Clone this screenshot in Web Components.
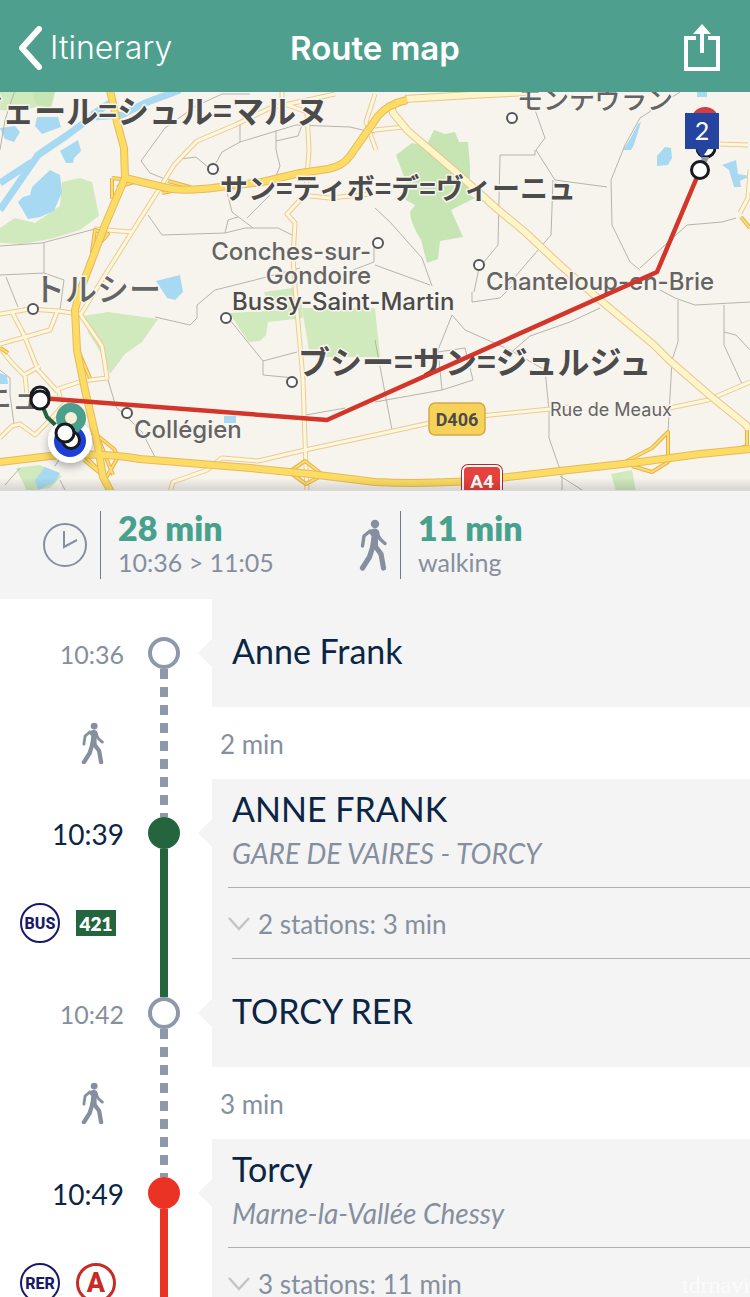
<!DOCTYPE html>
<html lang="en">
<head>
<meta charset="utf-8">
<meta name="viewport" content="width=device-width, initial-scale=1">
<title>Route map</title>
<style>
html {
    scrollbar-width: none;
}

body {
    margin: 0;
    background: #fff;
    color: #0b2545;
    font-family: Lato, "Noto Sans", sans-serif;
}
</style>
</head>
<body>
<route-screen></route-screen>

<script>
const TRIP = [
    { type: "stop", time: "10:36", name: "Anne Frank", below: "walk" },
    { type: "walk", duration: "2 min" },
    {
        type: "stop", time: "10:39", name: "ANNE FRANK", direction: "GARE DE VAIRES - TORCY",
        color: "#24653d", above: "walk", below: "#24653d"
    },
    {
        type: "ride", mode: "BUS", line: "421", shape: "box", color: "#24653d",
        label: "2 stations: 3 min"
    },
    { type: "stop", time: "10:42", name: "TORCY RER", above: "#24653d", below: "walk" },
    { type: "walk", duration: "3 min" },
    {
        type: "stop", time: "10:49", name: "Torcy", direction: "Marne-la-Vallée Chessy",
        color: "#ea3323", above: "walk", below: "#ea3323"
    },
    {
        type: "ride", mode: "RER", line: "A", shape: "circle", color: "#ea3323",
        label: "3 stations: 11 min"
    }
];

// Shared by every timeline row: time | rail | content
const ROW_STYLES = `
:host {
    display: grid;
    grid-template-columns: 124px 80px 8px minmax(0, 1fr);
}
.rail {
    display: flex;
    flex-direction: column;
    align-items: center;
}
.segment {
    flex: 1;
    width: 8px;
}
.segment.walk {
    background: repeating-linear-gradient(#8e98ab 0 10px, transparent 10px 18px);
}
.segment.offset {
    background: repeating-linear-gradient(#8e98ab 0 8px, transparent 8px 16px, #8e98ab 16px 18px);
}
.content {
    grid-column: 4;
}
`;

const ICONS = {
    walk: `<svg viewBox="0 0 28 52" aria-hidden="true">
<circle cx="16" cy="5" r="4.2" fill="currentColor"/>
<path d="M9 13Q12 9.500 16 9.500Q20 10 20.500 14L19 20L19 29L11 29L12.500 17Z" fill="currentColor"/>
<g fill="none" stroke="currentColor" stroke-linecap="round" stroke-linejoin="round">
<path d="M11 12L5 17L3.500 27" stroke-width="3.400"/>
<path d="M18 14L21 20L26 24.500" stroke-width="3.400"/>
<path d="M14 27L10.500 38L3.500 49" stroke-width="5.200"/>
<path d="M16 27L22 35L24.500 49" stroke-width="5.200"/>
</g></svg>`,
    clock: `<svg viewBox="0 0 44 44" fill="none" stroke="currentColor" aria-hidden="true">
<circle cx="22" cy="22" r="21" stroke-width="2"/>
<path d="M21 8V24L34 17" stroke-width="2"/></svg>`,
    back: `<svg viewBox="0 0 24 44" fill="none" stroke="currentColor" aria-hidden="true">
<path d="M21 3L4 22L21 41" stroke-width="6" stroke-linecap="round" stroke-linejoin="round"/></svg>`,
    share: `<svg viewBox="0 0 36 48" fill="none" stroke="currentColor" aria-hidden="true">
<path d="M12 14H2V45H34V14H24" stroke-width="4"/>
<path d="M18 29V7" stroke-width="4"/>
<path d="M18 0L27 10H9Z" fill="currentColor" stroke="none"/></svg>`,
    chevron: `<svg viewBox="0 0 22 14" fill="none" stroke="currentColor" aria-hidden="true">
<path d="M1 1L11 12L21 1" stroke-width="2.400"/></svg>`
};

class AppIcon extends HTMLElement {
    connectedCallback() {
        if (this.shadowRoot) return;
        this.attachShadow({ mode: "open" }).innerHTML = `
<style>
:host { display: block; flex: none; }
svg { display: block; width: 100%; height: auto; }
</style>
${ICONS[this.getAttribute("name")]}`;
    }
}

class NavBar extends HTMLElement {
    constructor() {
        super();
        this.attachShadow({ mode: "open" }).innerHTML = `
<style>
:host {
    display: grid;
    grid-template-columns: 1fr auto 1fr;
    align-items: center;
    height: 92px;
    padding: 4px 30px 0 18px;
    box-sizing: border-box;
    background: #4e9f8e;
    color: #fff;
    font-family: Inter, Roboto, sans-serif;
    font-size: 32px;
    line-height: 40px;
}
a {
    display: flex;
    align-items: center;
    gap: 8px;
    color: inherit;
    font-weight: 300;
    text-decoration: none;
}
h1 {
    margin: 0;
    padding-left: 12px;
    font-size: 33px;
    font-weight: 600;
}
button {
    justify-self: end;
    padding: 0;
    border: 0;
    background: none;
    color: inherit;
}
.back { width: 24px; }
.share { width: 36px; }
</style>
<a href="#itinerary"><app-icon class="back" name="back"></app-icon><slot name="back"></slot></a>
<h1><slot></slot></h1>
<button type="button" aria-label="Share"><app-icon class="share" name="share"></app-icon></button>`;
    }
}

class RouteMap extends HTMLElement {
    constructor() {
        super();
        this.attachShadow({ mode: "open" }).innerHTML = this.getTemplate();
    }

    getTemplate() {
        const motorways = [
            "M110 90L117 122L124 148L125 178L105 225L90 265L80 291L75 310L77 350L85 390L92 420L98 447L103 477L112 494",
            "M125 178L150 184L172 189Q192 191 220 187L262 182L300 173L328 169Q343 166 350 156L378 116Q388 104 407 100",
            "M0 462L50 456Q100 452 140 459L250 468L310 474L375 482Q440 485 500 478L560 471L640 462L700 454L750 449"
        ];
        const roads = [
            "M390 102L393 113L408 131L456 172L496 208L525 232L560 265L600 300L654 345L670 361L714 399L745 424L750 430",
            "M405 99L470 95L530 92"
        ];
        const lanes = [
            "M335 94L270 108L235 125L197 141L174 165L163 183L132 232L105 275L81 314",
            "M282 90V103L307 112L309 150L306 190M300 200L287 214L295 223L293 258L296 300L300 345L303 380L305 440L307 492",
            "M170 492L173 482L207 470L222 458L258 461L305 450L375 435L430 423L490 415L570 407M660 410L708 400L750 382",
            "M94 229L132 232M375 130L404 127M375 94L366 122L376 150M310 196L330 198L370 194",
            "M0 314L30 309L58 311L80 314L102 346L107 378L82 381L58 389L60 397",
            "M0 344L50 330L57 312M12 312L24 335L38 370L58 392",
            "M0 348L12 363L24 375L40 366M25 376L27 395M0 438L12 426L20 424L35 435L52 418L68 400",
            "M720 144L748 145M750 170L748 198L740 213"
        ];
        const ramps = [
            "M112 178V199M112 178L138 181L117 187M168 181L190 187L162 193M95 230L108 234L92 252Z",
            "M98 436L114 449L118 457L106 478L86 457M100 473L84 460M99 440L113 475M78 350L90 378",
            "M625 462L652 448L668 432V462L652 472L632 466M289 472L305 461L323 475L306 484Z",
            "M747 430V446L735 450M0 348L8 353M741 217L750 228"
        ];
        const tracks = [
            "M15 90L5 120L0 150M0 246L42 243L95 229M44 243V273L0 275M44 273L64 280L60 310M6 277L18 307",
            "M250 94H222L196 106L165 128L141 161L150 173L165 179M180 159L196 157L209 168M216 163L222 152L240 142V124M240 142L296 125L350 127L375 133M276 130V150L280 166L274 181M276 141L298 136L302 125",
            "M148 215L162 235L225 233L245 228L278 228L292 235M225 184L232 212L253 228M247 218L270 195M225 233L228 220L238 217M215 290L255 280L300 268M340 275L374 262V245",
            "M108 380L116 407L130 420L142 432L155 457M155 317L190 325L197 318V305L215 290M230 320L263 361V375L295 378M263 361L297 352M306 415L345 408",
            "M535 110L545 138L536 150L555 180L607 187M535 150V155H500L498 245L479 268L474 292M553 180L551 235L508 285",
            "M680 92L640 118L625 145L611 180L612 225L630 262L640 270M640 268L687 225L722 222L736 218",
            "M678 300V342L672 360L668 432M724 305V345L742 384M724 332L736 335L750 350M660 290L675 298L695 305L750 302",
            "M375 208L390 222L422 258L432 286M375 265L430 285M472 292V302L500 298L512 286M452 315L465 330L510 350L545 370L549 410V438L562 475V490",
            "M452 315L438 350L442 390L375 402M442 390L473 380L465 348L438 352M375 340L392 430M600 308L570 322L530 336L500 362",
            "M0 370L10 378V395L14 424M62 455L55 466M20 468L5 485M60 480L66 492M560 476L582 490"
        ];
        const paths = (list, attrs) => list.map((d) => `<path d="${d}" ${attrs}/>`).join("");

        return `
<style>
:host {
    display: block;
    overflow: hidden;
    border-bottom: 1px solid #dadad8;
}
svg { display: block; width: 100%; height: auto; }
text {
    fill: #4b4b4b;
    font-family: Inter, Roboto, sans-serif;
    font-size: 24px;
    font-weight: 500;
    paint-order: stroke;
    stroke: #f8f5ef;
    stroke-width: 3px;
    stroke-linejoin: round;
}
.jp {
    font-family: "Noto Sans CJK JP", sans-serif;
    font-weight: 700;
}
.soft { fill: #646464; font-weight: 500; }
.plain { stroke: none; }
</style>
<svg viewBox="0 92 750 398" role="img" aria-label="Map of the route from Torcy">
<defs>
<filter id="shadow" x="-50%" y="-50%" width="200%" height="200%">
<feDropShadow dx="0" dy="4" stdDeviation="4" flood-opacity="0.3"/>
</filter>
<linearGradient id="edge" x1="0" y1="0" x2="0" y2="1">
<stop offset="0" stop-color="#000" stop-opacity="0"/>
<stop offset="1" stop-color="#000" stop-opacity="0.13"/>
</linearGradient>
</defs>
<rect y="92" width="750" height="398" fill="#f7f4ee"/>
<g fill="#d0e9bd">
<path d="M0 228L15 218L35 223L60 206L62 182L80 178L92 182L99 216L80 230L50 239L22 244L0 243Z"/>
<path d="M0 92H55L51 110L38 106L20 112L0 110Z"/>
<path d="M83 316L108 312L158 319L142 342L125 354L110 374L101 353L88 332Z"/>
<path d="M230 313L302 309L303 318L268 322L266 335L260 341L249 342L239 328ZM264 292L292 288L302 302V310H270Z"/>
<path d="M302 308L375 308L380 357H310Z"/>
<path d="M16 468L40 465L62 476L50 488L27 491Z"/>
<path d="M611 474L632 470L636 491H616Z"/>
</g>
<path d="M434 130L445 134L455 132L459 142H468L470 165V195L475 198L451 210L463 237L440 241L438 259L427 263L421 240Q410 222 410 212L415 205L400 197L407 185L396 155L412 143L426 146Z" fill="#c6e5b3"/>
<path d="M32 92L55 92L50 108L36 104Z" fill="#c6e5b3"/>
<g fill="#a8d9f2">
<path d="M23 197L30 195L32 187L50 170L60 175L62 192L54 211L40 217L28 219L18 202Z"/>
<path d="M37 117L58 117L61 127L42 134L35 126Z"/>
<path d="M0 128L15 126L20 132L14 142L5 139Z"/>
<path d="M60 151L78 140L81 151L74 158L73 163L66 163Z"/>
<path d="M156 281L180 275L183 292L175 300L167 298Z"/>
<path d="M0 373L7 376L8 384L0 384ZM35 480L45 467L60 473L55 482L38 490Z"/>
<path d="M224 416H236V423H224ZM697 92H707V97H697Z"/>
<path d="M638 124L641 122L634 145L631 150H623L630 139Z"/>
<path d="M665 147L671 148L672 158L668 165L657 166V156Z"/>
<path d="M722 165L736 160L738 174L750 176L740 181L741 187H734L729 170Z"/>
</g>
<path d="M0 210L22 178L38 155L66 136L92 117L122 115L145 103L180 90M0 183L32 162M92 115L110 103" fill="none" stroke="#a8d9f2" stroke-width="7" stroke-linejoin="round"/>
<g fill="none" stroke-linejoin="round">
${paths(tracks, 'stroke="#b6b4ad" stroke-width="1"')}
${paths(lanes, 'stroke="#ecca96" stroke-width="5"')}
${paths(lanes, 'stroke="#fdf7dc" stroke-width="3"')}
${paths(roads, 'stroke="#e8c58e" stroke-width="8"')}
${paths(roads, 'stroke="#fef5c9" stroke-width="6"')}
${paths(ramps, 'stroke="#e6b24e" stroke-width="4"')}
${paths(ramps, 'stroke="#fcdc6a" stroke-width="2"')}
${paths(motorways, 'stroke="#e8b960" stroke-width="8"')}
${paths(motorways, 'stroke="#fcdc62" stroke-width="6"')}
</g>
<g fill="#fff" stroke="#555" stroke-width="2">
<circle cx="512" cy="118" r="5"/><circle cx="213" cy="169" r="5"/>
<circle cx="378" cy="243" r="5"/><circle cx="479" cy="265" r="5"/>
<circle cx="33" cy="309" r="5"/><circle cx="226" cy="318" r="5"/>
<circle cx="292" cy="382" r="5"/><circle cx="127" cy="413" r="5"/>
</g>
<text class="jp" x="328" y="123" text-anchor="end" style="font-size:32px">ヴェール=シュル=マルヌ</text>
<text class="jp soft" x="517" y="109" style="font-size:26px">モンテヴラン</text>
<text class="jp" x="220" y="199" style="font-size:28px">サン=ティボ=デ=ヴィーニュ</text>
<text class="jp soft" x="33" y="301" style="font-size:32px">トルシー</text>
<text class="jp" x="298" y="374" style="font-size:32px">ブシー=サン=ジュルジュ</text>
<text class="jp soft" x="40" y="409" text-anchor="end" style="font-size:28px">ニュ</text>
<text class="soft" x="371" y="260" text-anchor="end">Conches-sur-</text>
<text class="soft" x="371" y="284" text-anchor="end">Gondoire</text>
<text x="232" y="310">Bussy-Saint-Martin</text>
<text class="soft" x="486" y="290">Chanteloup-en-Brie</text>
<text class="soft" x="134" y="438">Collégien</text>
<text class="soft" x="550" y="416" style="font-size:18px;font-weight:400">Rue de Meaux</text>
<rect x="429" y="403" width="56" height="32" rx="6" fill="#f6d358" stroke="#d3a94c" stroke-width="1.5"/>
<text class="plain" x="457" y="426" text-anchor="middle" style="font-family:Roboto;font-size:18px;font-weight:700">D406</text>
<rect x="461" y="464" width="42" height="40" rx="7" fill="#b32a2b"/>
<rect x="463" y="466" width="38" height="38" rx="5" fill="#e5413d" stroke="#fff" stroke-width="2"/>
<text class="plain" x="482" y="488" text-anchor="middle" style="font-family:Roboto;font-size:19px;font-weight:700;fill:#fff">A4</text>
<rect y="478" width="750" height="12" fill="url(#edge)"/>
<g fill="none" stroke-linejoin="round">
<path d="M40 398L327 420L657 272L700 170" stroke="#d2352a" stroke-width="4.500"/>
<path d="M40 400L47 417L65 434" stroke="#24653d" stroke-width="4"/>
</g>
<circle cx="70" cy="441" r="22" fill="#fff" filter="url(#shadow)"/>
<circle cx="70" cy="441" r="16" fill="#1d3fd8"/>
<path d="M59 427L84 425L71 442Z" fill="#4a9f8d"/>
<circle cx="71" cy="418" r="10.500" fill="#f7efd5" stroke="#4a9f8d" stroke-width="9"/>
<g fill="#fff" stroke="#171b20" stroke-width="3">
<circle cx="71" cy="440" r="8.500"/>
<circle cx="65" cy="433" r="9"/>
<circle cx="40" cy="396" r="9"/>
<circle cx="40" cy="400" r="9"/>
</g>
<circle cx="705" cy="121" r="14" fill="#d33c40"/>
<circle cx="706" cy="148" r="9" fill="#fff" stroke="#171b20" stroke-width="3"/>
<path d="M702 157H709L707 162L700 165Z" fill="#9297ad"/>
<path d="M685 113H719V149H708L702 158L696 149H685Z" fill="#2444a0"/>
<text class="plain" x="702" y="140" text-anchor="middle" style="font-family:Lato;font-size:25px;font-weight:400;fill:#fff">2</text>
<circle cx="700" cy="170" r="8.500" fill="#fff" stroke="#171b20" stroke-width="3"/>
</svg>`;
    }
}

class SummaryItem extends HTMLElement {
    constructor() {
        super();
        this.attachShadow({ mode: "open" }).innerHTML = `
<style>
:host {
    display: grid;
    grid-template-columns: 100px minmax(0, 1fr);
    align-items: center;
    color: #858f9f;
}
.icon {
    display: flex;
    justify-content: flex-end;
    padding-right: 13px;
}
.text {
    padding-left: 17px;
    border-left: 1px solid #6f7a8c;
    font-size: 25px;
    line-height: 34px;
}
strong {
    display: block;
    color: #48a18c;
    font-size: 34px;
    font-weight: 800;
    line-height: 34px;
}
</style>
<div class="icon"><slot name="icon"></slot></div>
<div class="text"><strong><slot name="value"></slot></strong><slot></slot></div>`;
    }
}

class TripSummary extends HTMLElement {
    constructor() {
        super();
        this.attachShadow({ mode: "open" }).innerHTML = `
<style>
:host {
    display: grid;
    grid-template-columns: 2fr 3fr;
    align-items: center;
    height: 108px;
    background: #f4f4f4;
}
.clock { width: 44px; }
.walk { width: 28px; }
</style>
<summary-item>
<app-icon class="clock" slot="icon" name="clock"></app-icon>
<span slot="value">28 min</span>10:36 &gt; 11:05
</summary-item>
<summary-item>
<app-icon class="walk" slot="icon" name="walk"></app-icon>
<span slot="value">11 min</span>walking
</summary-item>`;
    }
}

class StopRow extends HTMLElement {
    setData(stop) {
        this.attachShadow({ mode: "open" }).innerHTML = `
<style>
${ROW_STYLES}
:host { height: 108px; }
time {
    align-self: center;
    padding-top: 2px;
    text-align: right;
    color: #858f9f;
    font-size: 25px;
    line-height: 32px;
}
time.main {
    color: #0b2545;
    font-size: 28px;
}
.dot {
    width: 32px;
    height: 32px;
    box-sizing: border-box;
    border: 4px solid #8e98ab;
    border-radius: 50%;
    background: #fff;
}
.content {
    position: relative;
    display: flex;
    flex-direction: column;
    justify-content: center;
    gap: 4px;
    padding: 0 0 4px 20px;
    background: #f4f4f4;
}
.content::before {
    content: "";
    position: absolute;
    left: -14px;
    top: 40px;
    border: 14px solid transparent;
    border-left: 0;
    border-right-color: #f4f4f4;
}
h2 {
    margin: 0;
    font-size: 34px;
    font-weight: 400;
    line-height: 40px;
}
p {
    margin: 0;
    color: #858f9f;
    font-size: 28px;
    font-style: italic;
    line-height: 40px;
}
</style>
<time></time>
<div class="rail"><div class="segment"></div><div class="dot"></div><div class="segment"></div></div>
<div class="content"><h2></h2></div>`;

        const time = this.shadowRoot.querySelector("time");
        time.textContent = stop.time;
        this.shadowRoot.querySelector("h2").textContent = stop.name;

        if (stop.color) {
            const dot = this.shadowRoot.querySelector(".dot");
            time.className = "main";
            dot.style.background = stop.color;
            dot.style.borderColor = stop.color;
        }

        if (stop.direction) {
            const direction = document.createElement("p");
            direction.textContent = stop.direction;
            this.shadowRoot.querySelector(".content").appendChild(direction);
        }

        const [above, below] = this.shadowRoot.querySelectorAll(".segment");
        this.paintSegment(above, stop.above, true);
        this.paintSegment(below, stop.below, false);
    }

    paintSegment(segment, kind, offset) {
        if (!kind) return;
        if (kind === "walk") {
            segment.classList.add(offset ? "offset" : "walk");
            return;
        }
        segment.style.background = kind;
    }
}

class WalkRow extends HTMLElement {
    setData(leg) {
        this.attachShadow({ mode: "open" }).innerHTML = `
<style>
${ROW_STYLES}
:host {
    height: 72px;
    align-items: center;
    color: #858f9f;
    font-size: 26px;
    line-height: 32px;
}
.rail { align-self: stretch; }
app-icon {
    width: 23px;
    justify-self: end;
    margin-right: 20px;
}
.content { padding: 2px 0 0 8px; }
</style>
<app-icon name="walk"></app-icon>
<div class="rail"><div class="segment offset"></div></div>
<div class="content"></div>`;
        this.shadowRoot.querySelector(".content").textContent = leg.duration;
    }
}

class LineBadge extends HTMLElement {
    connectedCallback() {
        if (this.shadowRoot) return;
        this.attachShadow({ mode: "open" }).innerHTML = `
<style>
:host {
    display: flex;
    align-items: center;
    justify-content: center;
    width: 40px;
    height: 40px;
    box-sizing: border-box;
    font-family: Roboto, sans-serif;
    font-weight: 800;
}
:host([kind="mode"]) {
    border: 2px solid #181a68;
    border-radius: 50%;
    color: #181a68;
    font-size: 16px;
}
:host([kind="circle"]) {
    border: 3px solid #c72b26;
    border-radius: 50%;
    color: #c72b26;
    font-size: 27px;
}
:host([kind="box"]) {
    height: 26px;
    background: #24653d;
    color: #fff;
    font-family: Lato, sans-serif;
    font-size: 19px;
}
</style>
<slot></slot>`;
    }
}

class RideRow extends HTMLElement {
    setData(leg) {
        this.attachShadow({ mode: "open" }).innerHTML = `
<style>
${ROW_STYLES}
:host { height: 72px; }
.badges {
    display: flex;
    align-items: center;
    gap: 16px;
    padding-left: 20px;
}
.content {
    display: flex;
    flex-direction: column;
    padding-left: 16px;
    background: #f4f4f4;
}
.content::before,
.content::after {
    content: "";
    height: 1px;
    background: #aeb0b4;
}
.content::after { margin-left: 4px; }
button {
    display: flex;
    flex: 1;
    align-items: center;
    gap: 8px;
    padding: 2px 0 0;
    border: 0;
    background: none;
    color: #858f9f;
    font: inherit;
    font-size: 26px;
    line-height: 32px;
    text-align: left;
}
app-icon {
    width: 22px;
    color: #c3c4c6;
}
</style>
<div class="badges">
<line-badge kind="mode">${leg.mode}</line-badge>
<line-badge kind="${leg.shape}">${leg.line}</line-badge>
</div>
<div class="rail"><div class="segment"></div></div>
<div class="content">
<button type="button" aria-expanded="false"><app-icon name="chevron"></app-icon>${leg.label}</button>
</div>`;
        this.shadowRoot.querySelector(".segment").style.background = leg.color;
    }
}

class RouteScreen extends HTMLElement {
    constructor() {
        super();
        this.attachShadow({ mode: "open" }).innerHTML = `
<style>
:host {
    display: block;
    position: relative;
    height: 100vh;
    overflow: hidden auto;
    scrollbar-width: none;
}
.mark {
    position: fixed;
    right: 0;
    bottom: 0;
    color: #fbfbfb;
    font-family: "Liberation Serif", serif;
    font-size: 24px;
    line-height: 24px;
}
</style>
<nav-bar><span slot="back">Itinerary</span>Route map</nav-bar>
<route-map></route-map>
<trip-summary></trip-summary>
<main></main>
<span class="mark">tdrnavi</span>`;
    }

    connectedCallback() {
        const main = this.shadowRoot.querySelector("main");
        main.replaceChildren();
        TRIP.forEach((entry) => {
            const row = document.createElement(`${entry.type}-row`);
            row.setData(entry);
            main.appendChild(row);
        });
    }
}

customElements.define("app-icon", AppIcon);
customElements.define("nav-bar", NavBar);
customElements.define("route-map", RouteMap);
customElements.define("summary-item", SummaryItem);
customElements.define("trip-summary", TripSummary);
customElements.define("line-badge", LineBadge);
customElements.define("stop-row", StopRow);
customElements.define("walk-row", WalkRow);
customElements.define("ride-row", RideRow);
customElements.define("route-screen", RouteScreen);
</script>
</body>
</html>
